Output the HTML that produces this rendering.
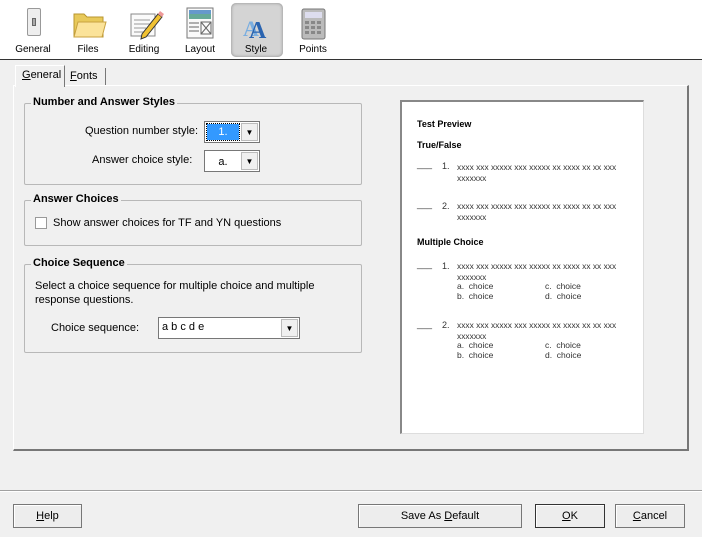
<!DOCTYPE html>
<html><head><style>
*{box-sizing:border-box;margin:0;padding:0}
body{width:702px;height:537px;background:#f0f0f0;font-family:"Liberation Sans",sans-serif;font-size:11px;color:#000;position:relative;overflow:hidden}
.a{position:absolute}
.tb{left:0;top:0;width:702px;height:60px;background:#fff;border-bottom:1px solid #333}
.lbl{top:44px;width:56px;text-align:center;font-size:10px}
.grp{border:1px solid #b8b8b8;border-radius:2px}
.gt{background:#f0f0f0;font-weight:bold;font-size:11px;padding:0 2px}
.btn{height:24px;border:1px solid #777;background:#ededed;text-align:center;line-height:22px;font-size:11px;box-shadow:inset 1px 1px 0 #fff}
.pv{font-size:8.4px;color:#333;letter-spacing:0}
.pn{font-size:9px;color:#333}
.pc{font-size:8.5px;color:#333;line-height:10px}
.pb{font-weight:bold;font-size:9px}
</style></head><body>
<div class="a tb"></div>
<div class="a" style="left:231px;top:3px;width:52px;height:54px;background:#d4d4d4;border-radius:5px;box-shadow:inset 0 0 3px #888"></div>
<div class="a" style="left:27px;top:8px;width:14px;height:28px;background:#eee;border:1px solid #999;border-radius:2px"><div class="a" style="left:4px;top:9px;width:4px;height:8px;background:#aaa;border:1px solid #666"></div></div>
<svg class="a" style="left:72px;top:10px" width="36" height="30"><path d="M2 4h10l3 3h16v20H2z" fill="#e8c95a" stroke="#b8962f"/><path d="M6 12h28l-4 15H2z" fill="#fbe39a" stroke="#c8a240"/></svg>
<svg class="a" style="left:128px;top:6px" width="36" height="34"><rect x="3" y="8" width="24" height="22" fill="#fafafa" stroke="#888"/><path d="M6 14h16M6 18h16M6 22h12M6 26h14" stroke="#999"/><path d="M14 28l16-20 4 3-16 20-5 2z" fill="#f1c232" stroke="#333"/><path d="M30 8l2-3 4 3-2 3z" fill="#e99"/></svg>
<svg class="a" style="left:185px;top:6px" width="32" height="34"><rect x="2" y="2" width="26" height="30" fill="#fafafa" stroke="#777"/><rect x="4" y="4" width="22" height="9" fill="#6a9"/><rect x="4" y="4" width="22" height="4" fill="#69c"/><path d="M4 17h10M4 21h10M4 25h10M16 16h10v12H16zM16 16l10 12M26 16l-10 12" stroke="#666" fill="none"/></svg>
<svg class="a" style="left:241px;top:8px" width="32" height="34"><text x="2" y="28" font-size="22" font-family="Liberation Serif" font-weight="bold" fill="#7aaee0">A</text><text x="8" y="30" font-size="24" font-family="Liberation Serif" font-weight="bold" fill="#2a64b0">A</text></svg>
<svg class="a" style="left:301px;top:8px" width="26" height="32"><rect x="1" y="1" width="23" height="30" rx="2" fill="#bbb" stroke="#777"/><rect x="4" y="4" width="17" height="6" fill="#dde"/><g fill="#888"><rect x="4" y="13" width="4" height="3"/><rect x="10" y="13" width="4" height="3"/><rect x="16" y="13" width="4" height="3"/><rect x="4" y="18" width="4" height="3"/><rect x="10" y="18" width="4" height="3"/><rect x="16" y="18" width="4" height="3"/><rect x="4" y="23" width="4" height="3"/><rect x="10" y="23" width="4" height="3"/><rect x="16" y="23" width="4" height="3"/></g></svg>
<div class="a lbl" style="left:5px">General</div>
<div class="a lbl" style="left:60px">Files</div>
<div class="a lbl" style="left:116px">Editing</div>
<div class="a lbl" style="left:172px">Layout</div>
<div class="a lbl" style="left:228px">Style</div>
<div class="a lbl" style="left:285px">Points</div>
<div class="a" style="left:13px;top:85px;width:676px;height:366px;border:1px solid #fff;border-right:2px solid #777;border-bottom:2px solid #777;"></div>
<div class="a" style="left:15px;top:65px;width:50px;height:22px;border:1px solid #fff;border-right:1px solid #777;border-bottom:none;background:#f0f0f0;padding:3px 0 0 6px"><u>G</u>eneral</div>
<div class="a" style="left:65px;top:68px;width:41px;height:17px;border-right:1px solid #777;padding:2px 0 0 5px"><u>F</u>onts</div>
<div class="a grp" style="left:24px;top:103px;width:338px;height:82px"></div>
<div class="a gt" style="left:31px;top:96px">Number and Answer Styles</div>
<div class="a" style="left:85px;top:125px">Question number style:</div>
<div class="a" style="left:92px;top:154px">Answer choice style:</div>
<div class="a" style="left:204px;top:121px;width:56px;height:22px;border:1px solid #777;background:#fff"><div class="a" style="left:2px;top:2px;width:32px;height:16px;background:#3399ff;color:#fff;text-align:center;line-height:16px;outline:1px dotted #000">1.</div><div class="a" style="right:1px;top:1px;width:17px;height:18px;background:#f0f0f0;border:1px solid #bbb;font-size:8px;text-align:center;line-height:17px">▼</div></div>
<div class="a" style="left:204px;top:150px;width:56px;height:22px;border:1px solid #777;background:#fff"><div class="a" style="left:2px;top:2px;width:32px;height:16px;text-align:center;line-height:18px">a.</div><div class="a" style="right:1px;top:1px;width:17px;height:18px;background:#f0f0f0;border:1px solid #bbb;font-size:8px;text-align:center;line-height:17px">▼</div></div>
<div class="a grp" style="left:24px;top:200px;width:338px;height:46px"></div>
<div class="a gt" style="left:31px;top:193px">Answer Choices</div>
<div class="a" style="left:35px;top:217px;width:12px;height:12px;border:1px solid #999;background:#fff"></div>
<div class="a" style="left:53px;top:217px">Show answer choices for TF and YN questions</div>
<div class="a grp" style="left:24px;top:264px;width:338px;height:89px"></div>
<div class="a gt" style="left:31px;top:257px">Choice Sequence</div>
<div class="a" style="left:35px;top:279px;line-height:14px">Select a choice sequence for multiple choice and multiple<br>response questions.</div>
<div class="a" style="left:51px;top:322px">Choice sequence:</div>
<div class="a" style="left:158px;top:317px;width:142px;height:22px;border:1px solid #777;background:#fff;padding:3px 0 0 3px">a b c d e<div class="a" style="right:1px;top:1px;width:17px;height:18px;background:#f0f0f0;border:1px solid #bbb;font-size:8px;text-align:center;line-height:17px">▼</div></div>
<div class="a" style="left:400px;top:100px;width:244px;height:334px;background:#fff;border-left:2px solid #888;border-top:2px solid #888;border-right:1px solid #ddd;border-bottom:1px solid #ddd"></div>
<div class="a pb" style="left:417px;top:119px">Test Preview</div>
<div class="a pb" style="left:417px;top:140px">True/False</div>
<div class="a pb" style="left:417px;top:237px">Multiple Choice</div>
<div class="a pn" style="left:417px;top:159px">___</div><div class="a pn" style="left:442px;top:161px">1.</div>
<div class="a pv" style="left:457px;top:162px;line-height:11px">xxxx xxx xxxxx xxx xxxxx xx xxxx xx xx xxx<br>xxxxxxx</div>
<div class="a pn" style="left:417px;top:199px">___</div><div class="a pn" style="left:442px;top:201px">2.</div>
<div class="a pv" style="left:457px;top:201px;line-height:11px">xxxx xxx xxxxx xxx xxxxx xx xxxx xx xx xxx<br>xxxxxxx</div>
<div class="a pn" style="left:417px;top:259px">___</div><div class="a pn" style="left:442px;top:261px">1.</div>
<div class="a pv" style="left:457px;top:261px;line-height:11px">xxxx xxx xxxxx xxx xxxxx xx xxxx xx xx xxx<br>xxxxxxx</div>
<div class="a pc" style="left:457px;top:281px">a.&nbsp; choice<br>b.&nbsp; choice</div>
<div class="a pc" style="left:545px;top:281px">c.&nbsp; choice<br>d.&nbsp; choice</div>
<div class="a pn" style="left:417px;top:319px">___</div><div class="a pn" style="left:442px;top:320px">2.</div>
<div class="a pv" style="left:457px;top:320px;line-height:11px">xxxx xxx xxxxx xxx xxxxx xx xxxx xx xx xxx<br>xxxxxxx</div>
<div class="a pc" style="left:457px;top:340px">a.&nbsp; choice<br>b.&nbsp; choice</div>
<div class="a pc" style="left:545px;top:340px">c.&nbsp; choice<br>d.&nbsp; choice</div>
<div class="a" style="left:0;top:490px;width:702px;height:2px;border-top:1px solid #a0a0a0;border-bottom:1px solid #fff"></div>
<div class="a btn" style="left:13px;top:504px;width:69px"><u>H</u>elp</div>
<div class="a btn" style="left:358px;top:504px;width:164px">Save As <u>D</u>efault</div>
<div class="a btn" style="left:535px;top:504px;width:70px;border-color:#333"><u>O</u>K</div>
<div class="a btn" style="left:615px;top:504px;width:70px"><u>C</u>ancel</div>
</body></html>
